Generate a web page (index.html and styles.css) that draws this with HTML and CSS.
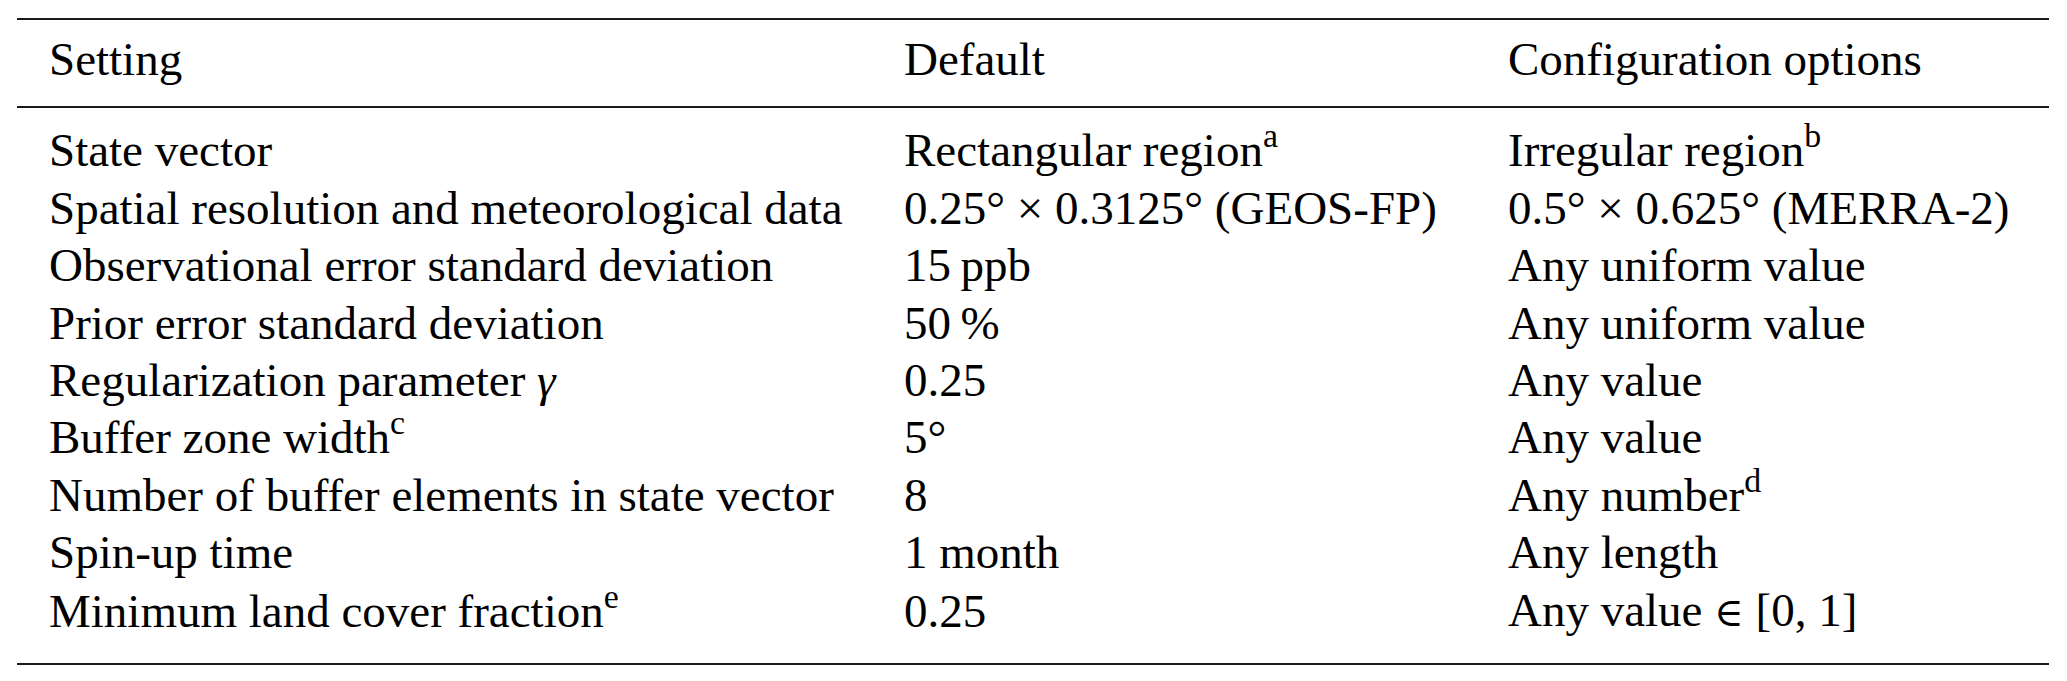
FILE: index.html
```html
<!DOCTYPE html>
<html lang="en">
<head>
    <meta charset="UTF-8">
    <title>Settings</title>
    <link rel="stylesheet" href="styles.css">
</head>
<body>
    <table class="settings">
        <thead>
            <tr>
                <th class="col-setting">Setting</th>
                <th class="col-default">Default</th>
                <th>Configuration options</th>
            </tr>
        </thead>
        <tbody>
            <tr>
                <td>State vector</td>
                <td>Rectangular region<sup>a</sup></td>
                <td>Irregular region<sup>b</sup></td>
            </tr>
            <tr>
                <td>Spatial resolution and meteorological data</td>
                <td>0.25° × 0.3125° (GEOS-FP)</td>
                <td>0.5° × 0.625° (MERRA-2)</td>
            </tr>
            <tr>
                <td>Observational error standard deviation</td>
                <td>15&#8201;ppb</td>
                <td>Any uniform value</td>
            </tr>
            <tr>
                <td>Prior error standard deviation</td>
                <td>50&#8201;%</td>
                <td>Any uniform value</td>
            </tr>
            <tr>
                <td>Regularization parameter <i class="math">γ</i></td>
                <td>0.25</td>
                <td>Any value</td>
            </tr>
            <tr>
                <td>Buffer zone width<sup>c</sup></td>
                <td>5°</td>
                <td>Any value</td>
            </tr>
            <tr>
                <td>Number of buffer elements in state vector</td>
                <td>8</td>
                <td>Any number<sup>d</sup></td>
            </tr>
            <tr>
                <td>Spin-up time</td>
                <td>1 month</td>
                <td>Any length</td>
            </tr>
            <tr>
                <td>Minimum land cover fraction<sup>e</sup></td>
                <td>0.25</td>
                <td>Any value <span class="sym">∈</span> [0, 1]</td>
            </tr>
        </tbody>
    </table>
</body>
</html>
```

FILE: styles.css
```css
body {
    margin: 0;
    background: #fff;
    color: #000;
    font-family: "Liberation Serif", "Times New Roman", "DejaVu Serif", serif;
}

.settings {
    margin: 18px 0 0 17px;
    width: 2032px;
    border-collapse: collapse;
    border-top: 2px solid #1a1a1a;
    border-bottom: 2px solid #1a1a1a;
    font-size: 47px;
    line-height: 57.4px;
    table-layout: fixed;
}

th, td {
    padding: 0;
    text-align: left;
    font-weight: normal;
    white-space: nowrap;
}

thead th {
    padding-top: 11px;
    padding-bottom: 18px;
    border-bottom: 2px solid #1a1a1a;
}

.col-setting {
    width: 855px;
}

.col-default {
    width: 604px;
}

th:first-child,
td:first-child {
    padding-left: 32px;
}

tbody tr:first-child td {
    padding-top: 14px;
}

tbody tr:last-child td {
    padding-bottom: 22px;
}

sup {
    font-size: 0.72em;
    line-height: 0;
    vertical-align: 0.56em;
}

.math {
    font-style: italic;
}

.sym {
    font-family: "DejaVu Serif", serif;
    font-size: 0.85em;
}
```
